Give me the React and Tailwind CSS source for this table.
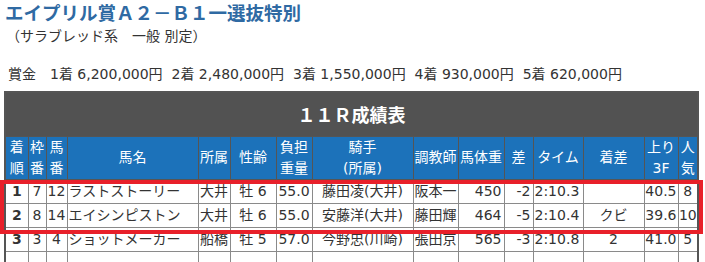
import React from "react";

const cols = [23, 18, 21, 131, 32, 46, 36, 101, 45, 46, 29, 50, 61, 34, 20];

const rows = [
  { pos: "1", waku: "7", num: "12", name: "ラストストーリー", area: "大井", sex: "牡 6", wt: "55.0", jockey: "藤田凌(大井)", trainer: "阪本一", body: "450", diff: "-2", time: "2:10.3", margin: "", f3: "40.5", pop: "8" },
  { pos: "2", waku: "8", num: "14", name: "エイシンピストン", area: "大井", sex: "牡 6", wt: "55.0", jockey: "安藤洋(大井)", trainer: "藤田輝", body: "464", diff: "-5", time: "2:10.4", margin: "クビ", f3: "39.6", pop: "10" },
  { pos: "3", waku: "3", num: "4", name: "ショットメーカー", area: "船橋", sex: "牡 5", wt: "57.0", jockey: "今野忠(川崎)", trainer: "張田京", body: "565", diff: "-3", time: "2:10.8", margin: "2", f3: "41.0", pop: "5" },
  { pos: "", waku: "", num: "", name: "", area: "", sex: "", wt: "", jockey: "", trainer: "", body: "", diff: "", time: "", margin: "", f3: "", pop: "" },
];

const th = "border border-[#555] bg-[#1c72ba] text-white font-normal text-[14px] leading-[17px] h-[42px] p-0 text-center align-middle";
const td = "border border-[#8a8a8a] bg-white text-[#333] text-[14px] leading-[16px] h-[24px] p-0 whitespace-nowrap overflow-hidden align-middle";

function Two({ a, b }) {
  return (
    <div className="flex flex-col items-center">
      <div className="h-[21px] leading-[21px]">{a}</div>
      <div className="h-[21px] leading-[21px]">{b}</div>
    </div>
  );
}

export default function App() {
  return (
    <div
      className="relative w-[705px] h-[262px] overflow-hidden bg-white text-[#333]"
      style={{ fontFamily: '"DejaVu Sans", "Noto Sans CJK JP", sans-serif' }}
    >
      <div
        className="h-[27px] pl-[5px] text-[18.5px] leading-[24px] font-bold text-[#2f6aa3]"
        style={{ fontFamily: '"Noto Sans CJK JP", sans-serif' }}
      >
        エイプリル賞Ａ２－Ｂ１一選抜特別
      </div>
      <div className="h-[22px] pl-[6px] text-[14px] leading-[18px] text-[#333]">
        （サラブレッド系　一般 別定）
      </div>
      <div className="h-[42px] pl-[8px] pt-[16px] text-[14px] leading-[18px] text-[#333] whitespace-pre">
        {"賞金　1着 6,200,000円  2着 2,480,000円  3着 1,550,000円  4着 930,000円  5着 620,000円"}
      </div>
      <table className="ml-[4px] w-[695px] table-fixed border-collapse border-2 border-[#555]">
        <colgroup>
          {cols.map((w, i) => (
            <col key={i} style={{ width: w }} />
          ))}
        </colgroup>
        <thead>
          <tr>
            <th
              colSpan={15}
              className="bg-[#525252] h-[44px] leading-[20px] text-white text-[18px] font-bold text-center border border-[#555]"
              style={{ fontFamily: '"Noto Sans CJK JP", sans-serif' }}
            >
              １１Ｒ成績表
            </th>
          </tr>
          <tr>
            <th className={th}><Two a="着" b="順" /></th>
            <th className={th}><Two a="枠" b="番" /></th>
            <th className={th}><Two a="馬" b="番" /></th>
            <th className={th}>馬名</th>
            <th className={th}>所属</th>
            <th className={th}>性齢</th>
            <th className={th}><Two a="負担" b="重量" /></th>
            <th className={th}><Two a="騎手" b="(所属)" /></th>
            <th className={th}>調教師</th>
            <th className={th}>馬体重</th>
            <th className={th}>差</th>
            <th className={th}>タイム</th>
            <th className={th}>着差</th>
            <th className={th}><Two a="上り" b="3F" /></th>
            <th className={th}><Two a="人" b="気" /></th>
          </tr>
        </thead>
        <tbody>
          {rows.map((r, i) => (
            <tr key={i}>
              <td className={`${td} text-center font-bold`}>{r.pos}</td>
              <td className={`${td} text-center`}>{r.waku}</td>
              <td className={`${td} text-center`}>{r.num}</td>
              <td className={`${td} text-left text-[#3a2ee8] pl-[1px]`}>{r.name}</td>
              <td className={`${td} text-center`}>{r.area}</td>
              <td className={`${td} text-center`}>{r.sex}</td>
              <td className={`${td} text-center`}>{r.wt}</td>
              <td className={`${td} text-center text-[#5b4fe6]`}>{r.jockey}</td>
              <td className={`${td} text-left text-[#6a3fe0] pl-[1px]`}>{r.trainer}</td>
              <td className={`${td} text-right pr-[2px]`}>{r.body}</td>
              <td className={`${td} text-right pr-[2px]`}>{r.diff}</td>
              <td className={`${td} text-left pl-[1px]`}>{r.time}</td>
              <td className={`${td} text-center`}>{r.margin}</td>
              <td className={`${td} text-right pr-[1px]`}>{r.f3}</td>
              <td className={`${td} text-center`}>{r.pop}</td>
            </tr>
          ))}
        </tbody>
      </table>
      <div className="absolute left-0 top-[180px] w-[703px] h-[54px] border-4 border-[#e8202a] pointer-events-none" />
    </div>
  );
}
